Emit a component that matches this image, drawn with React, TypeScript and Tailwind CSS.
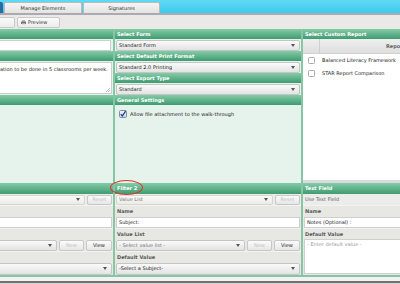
import React from 'react';

type Cls = { className?: string };

const Caret = () => (
  <svg width="4" height="3" viewBox="0 0 4 3" className="shrink-0">
    <path d="M0 0h4L2 3z" fill="#555" />
  </svg>
);

function Header({ label, className = '' }: { label?: string } & Cls) {
  return (
    <div
      className={`shrink-0 flex items-center px-[2px] bg-gradient-to-b from-[#82cca8] to-[#3f9b71] text-white font-bold ${className}`}
    >
      {label}
    </div>
  );
}

function Select({ text, muted, className = '' }: { text?: string; muted?: boolean } & Cls) {
  return (
    <div
      className={`flex items-center justify-between pl-[2px] pr-[4px] rounded-[2px] border border-[#c5c5c5] bg-gradient-to-b from-[#fafafa] to-[#e3e3e3] ${
        muted ? 'text-[#777]' : 'text-[#222]'
      } ${className}`}
    >
      <span className="truncate">{text}</span>
      <Caret />
    </div>
  );
}

function Btn({ label, disabled, className = '' }: { label: string; disabled?: boolean } & Cls) {
  return (
    <div
      className={`shrink-0 flex items-center justify-center rounded-[2px] border border-[#c8c8c8] bg-gradient-to-b from-[#fbfbfb] to-[#e6e6e6] ${
        disabled ? 'text-[#c2c2c2]' : 'text-[#222]'
      } ${className}`}
    >
      {label}
    </div>
  );
}

function Label({ children }: { children?: React.ReactNode }) {
  return (
    <div className="h-[11px] shrink-0 flex items-center px-[2px] border-t border-[#f3f3f1] font-bold text-[#5a5a5a]">
      {children}
    </div>
  );
}

// the left one is cropped by the screenshot, so its texts are left out
function FilterColumn({ title, bare }: { title?: string; bare?: boolean }) {
  return (
    <div className="w-[186px] shrink-0 flex flex-col bg-[#e7e7e3]">
      <Header label={title} className="h-[11px]" />
      <div className="h-[11px] flex items-center gap-[2px] px-[1px] bg-[#ecece8]">
        <Select
          text={bare ? undefined : 'Value List'}
          muted
          className="flex-1 h-[10px] from-[#f3f3ef] to-[#ebebe7] border-[#d6d6d2]"
        />
        <Btn label="Reset" disabled className="w-[25px] h-[10px]" />
      </div>
      <Label>{!bare && 'Name'}</Label>
      <div className="h-[12px] flex items-center px-[1px]">
        <div className="w-full h-[11px] flex items-center px-[2px] bg-white border border-[#cfcfcf] text-[#222]">
          {!bare && 'Subject:'}
        </div>
      </div>
      <Label>{!bare && 'Value List'}</Label>
      <div className="h-[12px] flex items-center gap-[2px] px-[1px]">
        <Select text={bare ? undefined : '- Select value list -'} muted className="flex-1 h-[11px]" />
        <Btn label="New" disabled className="w-[25px] h-[11px]" />
        <Btn label="View" className="w-[26px] h-[11px]" />
      </div>
      <Label>{!bare && 'Default Value'}</Label>
      <div className="h-[13px] flex items-center px-[1px]">
        <Select text={bare ? undefined : '-Select a Subject-'} className="w-full h-[12px]" />
      </div>
    </div>
  );
}

function TextFieldColumn() {
  return (
    <div className="w-[186px] shrink-0 flex flex-col bg-[#e7e7e3]">
      <Header label="Text Field" className="h-[11px]" />
      <div className="h-[11px] flex items-center px-[2px] bg-[#ececea] text-[#666]">Use Text Field</div>
      <Label>Name</Label>
      <div className="h-[12px] flex items-center px-[1px]">
        <div className="w-full h-[11px] flex items-center px-[2px] bg-white border border-[#cfcfcf] text-[#222]">
          Notes (Optional) :
        </div>
      </div>
      <Label>Default Value</Label>
      <div className="flex-1 px-[1px] pb-[1px]">
        <div className="h-full bg-white border border-[#cfcfcf] px-[2px] pt-[2px] text-[#9a9a9a]">
          - Enter default value -
        </div>
      </div>
    </div>
  );
}

const Divider = () => <div className="w-[2px] shrink-0 bg-[#86c6a5]" />;

function Checkbox({ checked }: { checked?: boolean }) {
  if (checked) {
    return (
      <svg width="8" height="8" viewBox="0 0 8 8" className="shrink-0">
        <defs>
          <linearGradient id="cb" x1="0" y1="0" x2="0" y2="1">
            <stop offset="0" stopColor="#f2f6fb" />
            <stop offset="1" stopColor="#c9d6e6" />
          </linearGradient>
        </defs>
        <rect x="0.5" y="0.5" width="7" height="7" rx="1.2" fill="url(#cb)" stroke="#7d8ea5" />
        <path d="M1.8 4.2L3.3 6 6.6 1.2" fill="none" stroke="#173f8a" strokeWidth="1.3" />
      </svg>
    );
  }
  return <div className="w-[7px] h-[7px] shrink-0 rounded-[1.5px] border border-[#a9a9a9] bg-white" />;
}

export default function App() {
  return (
    <div className="relative w-[400px] h-[284px] overflow-hidden bg-white flex flex-col font-['DejaVu_Sans',sans-serif] text-[5px] leading-none text-[#222]">
      {/* tabs */}
      <div className="h-[13px] shrink-0 flex items-end gap-[1px] bg-gradient-to-b from-[#5fdaf4] to-[#3acaec]">
        <div className="w-[3px] h-[11px] bg-[#2c6aa3] rounded-tr-[2px]" />
        <div className="w-[78px] h-[11px] flex items-center justify-center rounded-t-[2px] border border-b-0 border-[#bcbcbc] bg-gradient-to-b from-[#f5f5f5] to-[#e3e3e3] text-[#333]">
          Manage Elements
        </div>
        <div className="w-[77px] h-[11px] flex items-center justify-center rounded-t-[2px] border border-b-0 border-[#bcbcbc] bg-gradient-to-b from-[#f5f5f5] to-[#e3e3e3] text-[#333]">
          Signatures
        </div>
      </div>
      <div className="h-[2px] shrink-0 bg-[#aaaab0]" />

      {/* toolbar */}
      <div className="h-[14px] shrink-0 flex items-center gap-[2px] bg-[#ebe8e8]">
        <div className="w-[15px] h-[11px] rounded-r-[2px] border border-l-0 border-[#c9c9c9] bg-gradient-to-b from-[#fafafa] to-[#ececec]" />
        <div className="w-[43px] h-[11px] flex items-center gap-[2px] px-[3px] rounded-[2px] border border-[#c9c9c9] bg-gradient-to-b from-[#fafafa] to-[#ececec] text-[#333]">
          <svg width="5" height="5" viewBox="0 0 5 5" className="shrink-0">
            <rect x="1" y="0" width="3" height="2" fill="#bbb" />
            <rect x="0" y="1.5" width="5" height="2.5" fill="#777" />
            <rect x="1" y="3.5" width="3" height="1.5" fill="#ddd" />
          </svg>
          Preview
        </div>
      </div>

      {/* top section */}
      <div className="h-[154px] shrink-0 flex">
        <div className="w-[113px] shrink-0 flex flex-col overflow-hidden bg-[#e6f3ec]">
          <Header className="h-[10px]" />
          <div className="h-[12px] flex items-center pr-[2px] bg-[#e6f3ec]">
            <div className="w-full h-[11px] bg-white border border-l-0 border-[#cdcdcd]" />
          </div>
          <Header className="h-[10px]" />
          <div className="h-[34px] pr-[1px] py-[1px]">
            <div className="relative h-full bg-white border border-l-0 border-[#cdcdcd] pt-[4px] whitespace-nowrap">
              ation to be done in 5 classrooms per week.
              <svg width="4" height="4" viewBox="0 0 4 4" className="absolute right-[1px] bottom-[1px]">
                <path d="M0 4L4 0M2 4L4 2" stroke="#999" strokeWidth="0.6" />
              </svg>
            </div>
          </div>
          <Header className="h-[10px]" />
          <div className="flex-1 bg-[#e6f3ec]" />
        </div>
        <Divider />
        <div className="w-[186px] shrink-0 flex flex-col bg-[#e6f3ec]">
          <Header label="Select Form" className="h-[10px]" />
          <div className="h-[12px] flex items-center px-[1px]">
            <Select text="Standard Form" className="w-full h-[11px]" />
          </div>
          <Header label="Select Default Print Format" className="h-[10px]" />
          <div className="h-[12px] flex items-center px-[1px]">
            <Select text="Standard 2.0 Printing" className="w-full h-[11px]" />
          </div>
          <Header label="Select Export Type" className="h-[10px]" />
          <div className="h-[12px] flex items-center px-[1px]">
            <Select text="Standard" className="w-full h-[11px]" />
          </div>
          <Header label="General Settings" className="h-[10px]" />
          <div className="flex-1 flex items-start gap-[3px] px-[4px] pt-[5px]">
            <Checkbox checked />
            <span className="mt-[2px]">Allow file attachment to the walk-through</span>
          </div>
        </div>
        <Divider />
        <div className="w-[186px] shrink-0 flex flex-col bg-[#dcdcdc]">
          <Header label="Select Custom Report" className="h-[10px]" />
          <div className="flex-1 flex flex-col bg-white">
            <div className="h-[15px] flex border-b border-[#d2d2d2] bg-gradient-to-b from-[#efefef] to-[#dedede]">
              <div className="w-[17px] border-r border-[#cfcfcf]" />
              <div className="flex-1 flex items-center justify-center font-bold text-[#666]">Report Name</div>
            </div>
            {['Balanced Literacy Framework', 'STAR Report Comparison'].map((r) => (
              <div key={r} className="h-[13px] flex items-center">
                <div className="w-[17px] flex justify-center">
                  <Checkbox />
                </div>
                <span className="px-[2px]">{r}</span>
              </div>
            ))}
          </div>
          <div className="h-[3px] bg-[#dadada]" />
        </div>
      </div>

      {/* bottom section */}
      <div className="h-[92px] shrink-0 flex">
        <div className="w-[113px] shrink-0 overflow-hidden flex">
          <div className="-ml-[73px] flex">
            <FilterColumn bare />
          </div>
        </div>
        <Divider />
        <FilterColumn title="Filter 2" />
        <Divider />
        <TextFieldColumn />
      </div>
      <div className="h-[2px] shrink-0 bg-[#86c6a5]" />
      <div className="h-[4px] shrink-0 bg-[#f2f2f2]" />
      <div className="h-[2px] shrink-0 bg-[#707070]" />
      <div className="flex-1 bg-[#d8d8d8]" />

      {/* annotation */}
      <div className="absolute left-[110px] top-[180px] w-[33px] h-[15px] rounded-[50%] border-[1.5px] border-[#e2322a]" />
    </div>
  );
}
